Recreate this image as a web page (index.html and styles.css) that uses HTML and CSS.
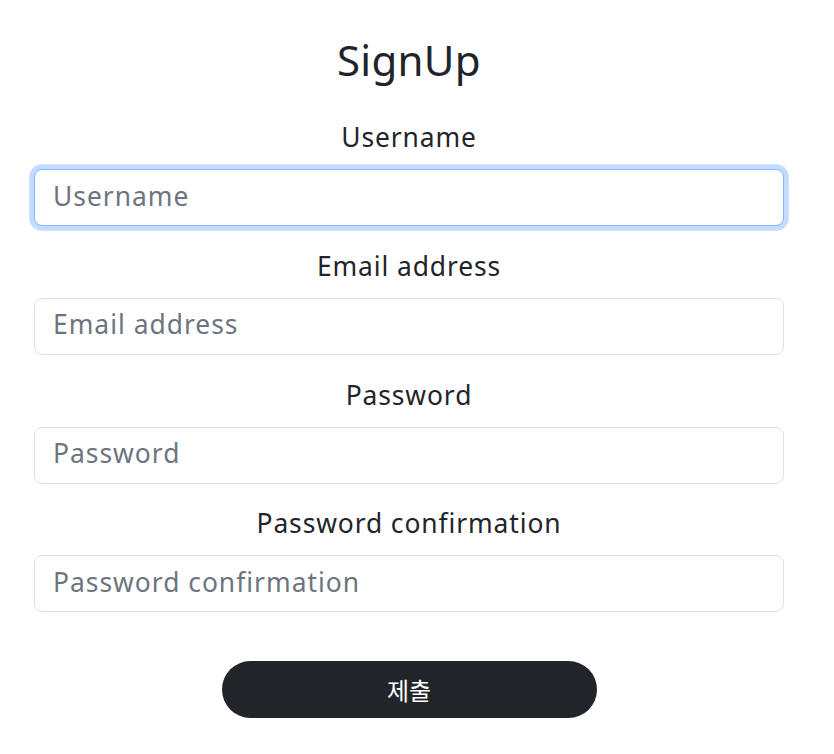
FILE: index.html
```html
<!DOCTYPE html>
<html lang="ko">
<head>
<meta charset="utf-8">
<title>SignUp</title>
<link rel="stylesheet" href="styles.css">
</head>
<body>
<main class="container">
  <h2 class="title">SignUp</h2>
  <form class="signup-form">
    <div class="field">
      <label class="field-label" for="username">Username</label>
      <input class="field-input is-focused" id="username" type="text" placeholder="Username">
    </div>
    <div class="field">
      <label class="field-label" for="email">Email address</label>
      <input class="field-input" id="email" type="email" placeholder="Email address">
    </div>
    <div class="field">
      <label class="field-label" for="password">Password</label>
      <input class="field-input" id="password" type="password" placeholder="Password">
    </div>
    <div class="field">
      <label class="field-label" for="password2">Password confirmation</label>
      <input class="field-input" id="password2" type="password" placeholder="Password confirmation">
    </div>
    <div class="actions">
      <button class="submit-btn" type="button">제출</button>
    </div>
  </form>
</main>
</body>
</html>
```

FILE: styles.css
```css
* { box-sizing: border-box; }

html, body {
  margin: 0;
  padding: 0;
  background: #ffffff;
}

body {
  padding-right: 16px;
  font-family: "Noto Sans", "Noto Sans CJK KR", sans-serif;
  color: #212529;
}

.container {
  width: 750px;
  margin: 0 auto;
  padding-top: 39px;
  display: flex;
  flex-direction: column;
  align-items: stretch;
}

.title {
  margin: 0 0 38px;
  height: 42px;
  font-size: 42px;
  font-weight: 400;
  line-height: 42px;
  letter-spacing: 0.3px;
  text-align: center;
}

.signup-form {
  display: flex;
  flex-direction: column;
  gap: 21.8px;
}

.field {
  display: flex;
  flex-direction: column;
  gap: 14px;
}

.field-label {
  font-size: 26.4px;
  line-height: 36px;
  letter-spacing: 0.9px;
  text-align: center;
}

.field-input {
  width: 100%;
  height: 57px;
  padding: 7px 18px 11px;
  font-family: inherit;
  font-size: 26.4px;
  letter-spacing: 1px;
  color: #212529;
  background: #fff;
  border: 1px solid #dee2e6;
  border-radius: 8px;
  outline: none;
}

.field-input::placeholder {
  color: #6c757d;
}

.field-input.is-focused {
  border-color: #86b7fe;
  box-shadow: 0 0 0 4.8px rgba(13, 110, 253, 0.25);
}

.actions {
  display: flex;
  justify-content: center;
  padding-top: 27px;
}

.submit-btn {
  width: 375px;
  height: 57px;
  padding: 0;
  background: #212529;
  color: #fff;
  border: none;
  border-radius: 29px;
  font-family: "Noto Sans CJK KR", sans-serif;
  font-size: 24px;
  cursor: pointer;
}
```
